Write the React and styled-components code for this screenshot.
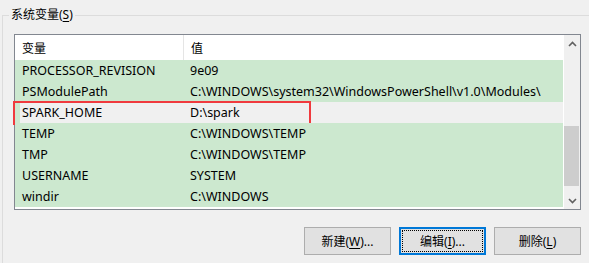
import React from 'react'
import styled, { createGlobalStyle } from 'styled-components'

const GlobalStyle = createGlobalStyle`
  html, body {
    margin: 0;
    padding: 0;
    background: #f0f0f0;
  }
  body {
    font-family: "Noto Sans", "Noto Sans CJK SC", sans-serif;
    font-size: 12px;
    color: #000;
  }
`

const rows = [
  { name: 'PROCESSOR_REVISION', value: '9e09' },
  { name: 'PSModulePath', value: 'C:\\WINDOWS\\system32\\WindowsPowerShell\\v1.0\\Modules\\' },
  { name: 'SPARK_HOME', value: 'D:\\spark', selected: true },
  { name: 'TEMP', value: 'C:\\WINDOWS\\TEMP' },
  { name: 'TMP', value: 'C:\\WINDOWS\\TEMP' },
  { name: 'USERNAME', value: 'SYSTEM' },
  { name: 'windir', value: 'C:\\WINDOWS' },
]

const App = () => {
  return (
    <StPage>
      <GlobalStyle />
      <StGroupBox>
        <StGroupTitle>
          系统变量(<u>S</u>)
        </StGroupTitle>
        <StListBox>
          <StTable>
            <StHeader>
              <StHeaderCell $width="169px">变量</StHeaderCell>
              <StHeaderCell>值</StHeaderCell>
            </StHeader>
            {rows.map((row) => (
              <StRow key={row.name} $selected={row.selected}>
                <StCell $width="168px">{row.name}</StCell>
                <StCell>{row.value}</StCell>
                {row.selected && <StMarker />}
              </StRow>
            ))}
          </StTable>
          <StScrollbar>
            <StArrow>
              <svg width="9" height="6" viewBox="0 0 9 6">
                <path d="M1 5 L4.5 1.5 L8 5" fill="none" stroke="#606060" strokeWidth="1.6" />
              </svg>
            </StArrow>
            <StTrack>
              <StThumb />
            </StTrack>
            <StArrow>
              <svg width="9" height="6" viewBox="0 0 9 6">
                <path d="M1 1 L4.5 4.5 L8 1" fill="none" stroke="#606060" strokeWidth="1.6" />
              </svg>
            </StArrow>
          </StScrollbar>
        </StListBox>
        <StButtonRow>
          <StButton>
            新建(<u>W</u>)...
          </StButton>
          <StButton $focused>
            <StFocusRing>
              编辑(<u>I</u>)...
            </StFocusRing>
          </StButton>
          <StButton>
            删除(<u>L</u>)
          </StButton>
        </StButtonRow>
      </StGroupBox>
    </StPage>
  )
}

const StPage = styled.div`
  width: 589px;
  height: 263px;
  overflow: hidden;
  background: #f0f0f0;
  padding: 15px 0 0 2px;
  box-sizing: border-box;
`

const StGroupBox = styled.div`
  position: relative;
  border-top: 1px solid #dcdcdc;
  border-left: 1px solid #dcdcdc;
  height: 300px;
  padding: 18px 0 0 11px;
  box-sizing: border-box;
`

const StGroupTitle = styled.span`
  position: absolute;
  top: -9px;
  left: 6px;
  padding: 0 2px;
  background: #f0f0f0;
  line-height: 16px;
  white-space: nowrap;
  u {
    text-decoration: underline;
    text-underline-offset: 2px;
  }
`

const StListBox = styled.div`
  width: 567px;
  height: 176px;
  border: 1px solid #828790;
  box-sizing: border-box;
  display: flex;
  background: #fff;
`

const StTable = styled.div`
  flex: 1;
  display: flex;
  flex-direction: column;
`

const StHeader = styled.div`
  height: 25px;
  display: flex;
  background: #fff;
  flex-shrink: 0;
`

const StHeaderCell = styled.div`
  width: ${(p) => p.$width || 'auto'};
  flex: ${(p) => (p.$width ? 'none' : '1')};
  padding-left: 7px;
  box-sizing: border-box;
  display: flex;
  align-items: center;
  border-right: ${(p) => (p.$width ? '1px solid #e5e5e5' : 'none')};
`

const StRow = styled.div`
  position: relative;
  height: 21px;
  display: flex;
  align-items: center;
  font-size: 12.5px;
  background: ${(p) => (p.$selected ? '#f0f0f0' : '#cce8cf')};
  box-shadow: ${(p) => (p.$selected ? 'inset 5px 0 0 #cce8cf' : 'none')};
  flex-shrink: 0;
`

const StCell = styled.div`
  width: ${(p) => p.$width || 'auto'};
  flex: ${(p) => (p.$width ? 'none' : '1')};
  padding-left: 7px;
  box-sizing: border-box;
  white-space: nowrap;
  overflow: hidden;
`

const StMarker = styled.div`
  position: absolute;
  left: -2px;
  top: -1px;
  width: 298px;
  height: 24px;
  border: 2px solid #f03a3e;
  box-sizing: border-box;
`

const StScrollbar = styled.div`
  width: 17px;
  display: flex;
  flex-direction: column;
  background: #f0f0f0;
  border-left: 1px solid #fff;
  box-sizing: border-box;
`

const StArrow = styled.div`
  height: 17px;
  display: flex;
  align-items: center;
  justify-content: center;
  flex-shrink: 0;
`

const StTrack = styled.div`
  flex: 1;
  display: flex;
  flex-direction: column;
  justify-content: flex-end;
`

const StThumb = styled.div`
  height: 60px;
  margin: 0 1px 6px 0;
  background: #cdcdcd;
`

const StButtonRow = styled.div`
  display: flex;
  justify-content: flex-end;
  gap: 8px;
  width: 567px;
  margin-top: 17px;
`

const StButton = styled.button`
  width: 87px;
  height: 28px;
  padding: 0;
  border: ${(p) => (p.$focused ? '2px solid #0078d7' : '1px solid #adadad')};
  background: #e1e1e1;
  font-family: inherit;
  font-size: 12px;
  color: #000;
  box-sizing: border-box;
  display: flex;
  align-items: center;
  justify-content: center;
  u {
    text-underline-offset: 2px;
  }
`

const StFocusRing = styled.span`
  flex: 1;
  align-self: stretch;
  margin: 1px;
  border: 1px dotted #000;
  display: flex;
  align-items: center;
  justify-content: center;
`

export default App
